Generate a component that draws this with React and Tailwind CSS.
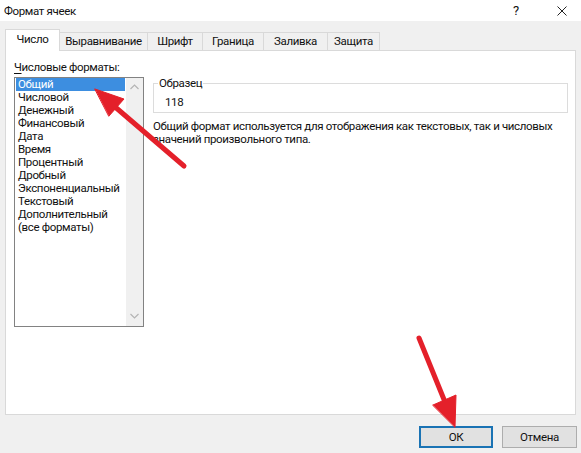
import React from "react";

const formats = [
  "Общий",
  "Числовой",
  "Денежный",
  "Финансовый",
  "Дата",
  "Время",
  "Процентный",
  "Дробный",
  "Экспоненциальный",
  "Текстовый",
  "Дополнительный",
  "(все форматы)",
];

const tabs = [
  { label: "Выравнивание", w: "w-[88px]" },
  { label: "Шрифт", w: "w-[55px]" },
  { label: "Граница", w: "w-[61px]" },
  { label: "Заливка", w: "w-[64px]" },
  { label: "Защита", w: "w-[52px]" },
];

function Chevron({ up }) {
  return (
    <svg width="9" height="6" viewBox="0 0 9 6" className="block">
      <path
        d={up ? "M0.5 5 L4.5 1 L8.5 5" : "M0.5 1 L4.5 5 L8.5 1"}
        fill="none"
        stroke="#b4b4b4"
        strokeWidth="1.2"
      />
    </svg>
  );
}

function Arrows() {
  return (
    <svg
      className="absolute inset-0 pointer-events-none"
      width="581"
      height="453"
      viewBox="0 0 581 453"
    >
      <g fill="#e4202a" stroke="#e4202a" strokeLinecap="round">
        <line x1="184" y1="166" x2="114" y2="106" strokeWidth="5" />
        <polygon points="95,89 124,99 109,116" strokeWidth="1" strokeLinejoin="round" />
        <line x1="419" y1="338" x2="445" y2="402" strokeWidth="5" />
        <polygon points="455,427 456,395 433,405" strokeWidth="1" strokeLinejoin="round" />
      </g>
    </svg>
  );
}

export default function App() {
  return (
    <div className="relative w-[581px] h-[453px] overflow-hidden bg-[#f0f0f0] text-[#111] text-[11.5px] tracking-[-0.35px] font-['Roboto',sans-serif]">
      {/* caption bar */}
      <div className="h-[21px] bg-white flex items-center pl-[4px] leading-[16px]">
        <span>Формат ячеек</span>
        <div className="ml-auto flex items-center">
          <span className="w-[46px] text-center text-[13px]">?</span>
          <span className="w-[42px] pl-[18px] flex items-center">
            <svg width="10" height="10" viewBox="0 0 10 10" className="block">
              <path d="M0.5 0.5 L9.5 9.5 M9.5 0.5 L0.5 9.5" stroke="#222" strokeWidth="1" />
            </svg>
          </span>
        </div>
      </div>

      {/* tab strip */}
      <div className="pt-[8px] pl-[5px]">
        <div className="relative z-10 -mb-px flex items-end h-[22px]">
          <div className="w-[55px] h-[22px] bg-white border border-b-0 border-[#d9d9d9] flex items-center justify-center pb-[2px]">
            Число
          </div>
          {tabs.map((t) => (
            <div
              key={t.label}
              className={`${t.w} h-[18px] mb-[1px] border-t border-r border-[#d9d9d9] flex items-center justify-center`}
            >
              {t.label}
            </div>
          ))}
        </div>

        {/* page */}
        <div className="w-[571px] h-[365px] bg-white border border-[#d9d9d9] flex">
          <div className="pl-[8px] pt-[8px]">
            <div className="h-[16px] leading-[16px]">
              <span className="underline underline-offset-2">Ч</span>исловые форматы:
            </div>
            <div className="mt-[2px] w-[130px] h-[250px] border border-[#828282] flex">
              <div className="flex-1 px-[1px] leading-[13px]">
                {formats.map((f, i) => (
                  <div
                    key={f}
                    className={
                      i === 0
                        ? "bg-[#3d8ee0] text-white pl-[2px] h-[13px] whitespace-nowrap"
                        : "pl-[2px] h-[13px] whitespace-nowrap"
                    }
                  >
                    {f}
                  </div>
                ))}
              </div>
              <div className="w-[17px] bg-[#f0f0f0] flex flex-col items-center justify-between pt-[6px] pb-[7px]">
                <Chevron up />
                <Chevron />
              </div>
            </div>
          </div>

          <div className="flex-1 min-w-0 pl-[9px] pr-[7px] pt-[24px]">
            <fieldset className="w-full h-[38px] border border-[#dcdcdc]">
              <legend className="ml-[4px] px-[1px] leading-[16px]">Образец</legend>
              <div className="pl-[11px] pt-[5px] leading-[13px]">118</div>
            </fieldset>
            <p className="mt-[7px] leading-[13px] whitespace-nowrap">
              Общий формат используется для отображения как текстовых, так и числовых
              <br />
              значений произвольного типа.
            </p>
          </div>
        </div>
      </div>

      {/* dialog buttons */}
      <div className="flex justify-end gap-[9px] pr-[4px] pt-[11px]">
        <button className="w-[74px] h-[22px] bg-[#e1e1e1] border-2 border-[#1a73b4] leading-[16px]">
          ОК
        </button>
        <button className="w-[75px] h-[22px] bg-[#e1e1e1] border border-[#adadad] leading-[16px]">
          Отмена
        </button>
      </div>

      <Arrows />
    </div>
  );
}
